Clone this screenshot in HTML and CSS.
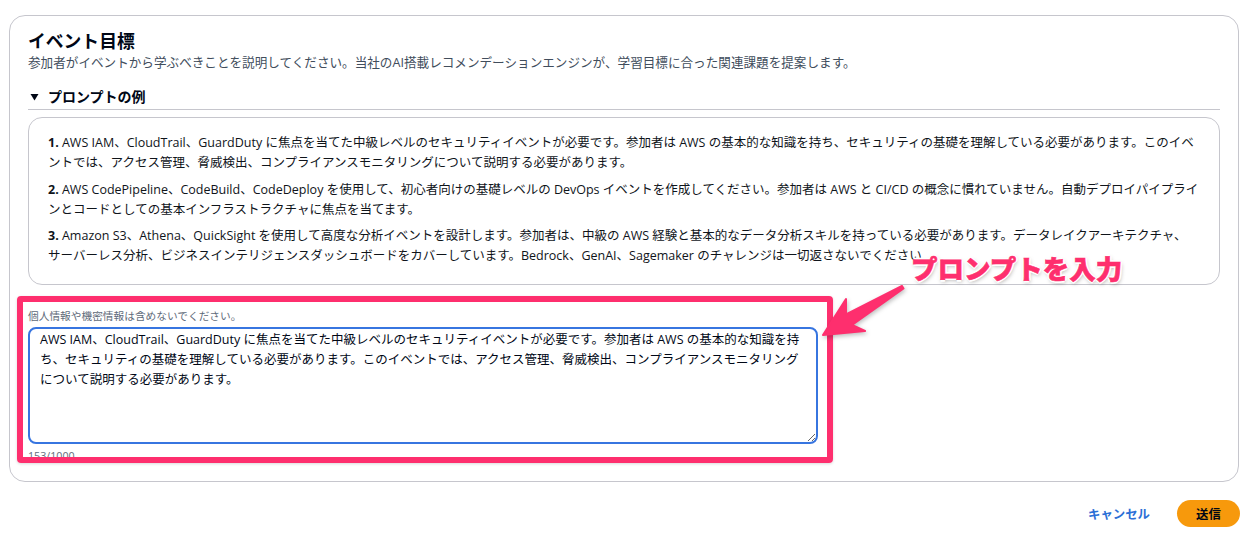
FILE: index.html
```html
<!DOCTYPE html>
<html lang="ja">
<head>
  <meta charset="UTF-8">
  <meta name="viewport" content="width=device-width, initial-scale=1.0">
  <title>イベント目標</title>
  <link rel="stylesheet" href="styles.css">
</head>
<body>
  <div class="page">
    <div class="panel">
      <h2 class="title">イベント目標</h2>
      <p class="description">参加者がイベントから学ぶべきことを説明してください。当社のAI搭載レコメンデーションエンジンが、学習目標に合った関連課題を提案します。</p>

      <details class="examples" open>
        <summary class="examples-toggle">
          <svg class="caret" width="9" height="8" viewBox="0 0 9 8"><path d="M0.5 1h8L4.5 7.5z" fill="#000716"/></svg>
          プロンプトの例
        </summary>
        <div class="examples-box">
          <p><b>1.</b> AWS IAM、CloudTrail、GuardDuty に焦点を当てた中級レベルのセキュリティイベントが必要です。参加者は AWS の基本的な知識を持ち、セキュリティの基礎を理解している必要があります。このイベ<br>ントでは、アクセス管理、脅威検出、コンプライアンスモニタリングについて説明する必要があります。</p>
          <p><b>2.</b> AWS CodePipeline、CodeBuild、CodeDeploy を使用して、初心者向けの基礎レベルの DevOps イベントを作成してください。参加者は AWS と CI/CD の概念に慣れていません。自動デプロイパイプライ<br>ンとコードとしての基本インフラストラクチャに焦点を当てます。</p>
          <p><b>3.</b> Amazon S3、Athena、QuickSight を使用して高度な分析イベントを設計します。参加者は、中級の AWS 経験と基本的なデータ分析スキルを持っている必要があります。データレイクアーキテクチャ、<br>サーバーレス分析、ビジネスインテリジェンスダッシュボードをカバーしています。Bedrock、GenAI、Sagemaker のチャレンジは一切返さないでください</p>
        </div>
      </details>

      <div class="field">
        <label class="field-hint" for="prompt">個人情報や機密情報は含めないでください。</label>
        <textarea class="prompt-input" id="prompt">AWS IAM、CloudTrail、GuardDuty に焦点を当てた中級レベルのセキュリティイベントが必要です。参加者は AWS の基本的な知識を持
ち、セキュリティの基礎を理解している必要があります。このイベントでは、アクセス管理、脅威検出、コンプライアンスモニタリング
について説明する必要があります。</textarea>
        <div class="counter">153/1000</div>
      </div>
    </div>

    <div class="actions">
      <button class="btn-link">キャンセル</button>
      <button class="btn-primary">送信</button>
    </div>

    <!-- annotation overlay -->
    <div class="highlight"></div>
    <div class="callout">プロンプトを入力</div>
    <svg class="arrow" width="110" height="70" viewBox="810 275 110 70">
      <polygon points="823,335 846,299 846,314.5 902,286 903.5,288.5 852,325 865,331" fill="#fe2f6e" stroke="#fe2f6e" stroke-width="2" stroke-linejoin="round"/>
    </svg>
  </div>
</body>
</html>
```

FILE: styles.css
```css
body {
  margin: 0;
  background-color: #fff;
  font-family: "Open Sans", "Noto Sans CJK JP", sans-serif;
  color: #000716;
}
.page {
  position: relative;
  width: 1257px;
  height: 547px;
  padding-top: 15px;
  box-sizing: border-box;
}
.panel {
  margin-left: 9px;
  width: 1230px;
  box-sizing: border-box;
  border: 1px solid #c6c6cd;
  border-radius: 16px;
  padding: 13px 18px 18px 18px;
}
.title {
  margin: 0;
  font-size: 17.8px;
  line-height: 24px;
  font-weight: 700;
}
.description {
  margin: 1px 0 0;
  font-size: 12.6px;
  line-height: 18px;
  color: #414d5c;
}
.examples {
  margin-top: 15px;
}
.examples-toggle {
  list-style: none;
  display: flex;
  align-items: center;
  gap: 9px;
  padding: 0 0 2px 2px;
  font-size: 14px;
  line-height: 20px;
  font-weight: 700;
  border-bottom: 1px solid #c6c6cd;
  cursor: pointer;
}
.examples-toggle::-webkit-details-marker {
  display: none;
}
.examples-box {
  margin-top: 7px;
  border: 1px solid #c6c6cd;
  border-radius: 14px;
  padding: 15px 19px 18px;
}
.examples-box p {
  margin: 0 0 6.5px;
  font-size: 12.5px;
  line-height: 20px;
  white-space: nowrap;
  color: #0f141a;
}
.examples-box p:last-child {
  margin-bottom: 0;
}
.field {
  margin-top: 24px;
}
.field-hint {
  display: block;
  height: 14px;
  font-size: 10.7px;
  line-height: 14px;
  color: #5f6b7a;
}
.prompt-input {
  display: block;
  margin-top: 4px;
  width: 790px;
  height: 117px;
  box-sizing: border-box;
  border: 2px solid #3775e0;
  border-radius: 8px;
  padding: 1px 10px;
  font-family: inherit;
  font-size: 12.5px;
  line-height: 20px;
  color: #000716;
  white-space: pre;
  overflow: hidden;
  outline: none;
}
.counter {
  margin-top: 5px;
  font-size: 10.7px;
  line-height: 14px;
  color: #5f6b7a;
}
.actions {
  display: flex;
  justify-content: flex-end;
  align-items: center;
  gap: 11px;
  margin: 18px 17px 0 0;
}
.btn-link {
  border: none;
  background: none;
  padding: 4px 16px;
  font-family: inherit;
  font-size: 12.4px;
  font-weight: 700;
  color: #2b6fd6;
  cursor: pointer;
}
.btn-primary {
  border: none;
  border-radius: 14px;
  background-color: #f7990c;
  width: 63px;
  height: 27px;
  font-family: inherit;
  font-size: 12.4px;
  font-weight: 700;
  color: #000716;
  cursor: pointer;
}
.highlight {
  position: absolute;
  left: 17px;
  top: 296px;
  width: 816px;
  height: 167px;
  box-sizing: border-box;
  border: 6px solid #fe2f6e;
  border-radius: 4px;
  box-shadow: 0 1px 3px rgba(0, 0, 0, 0.15);
}
.callout {
  position: absolute;
  left: 911px;
  top: 251px;
  font-size: 26.5px;
  line-height: 36px;
  font-weight: 900;
  color: #fe2f6e;
  -webkit-text-stroke: 0.6px #fe2f6e;
  text-shadow: -2px 0 0 #fff, 2px 0 0 #fff, 0 -2px 0 #fff, 0 2px 0 #fff,
    1px 2px 4px rgba(0, 0, 0, 0.35);
}
.arrow {
  position: absolute;
  left: 810px;
  top: 275px;
  filter: drop-shadow(1px 2px 2px rgba(0, 0, 0, 0.25));
}
```
